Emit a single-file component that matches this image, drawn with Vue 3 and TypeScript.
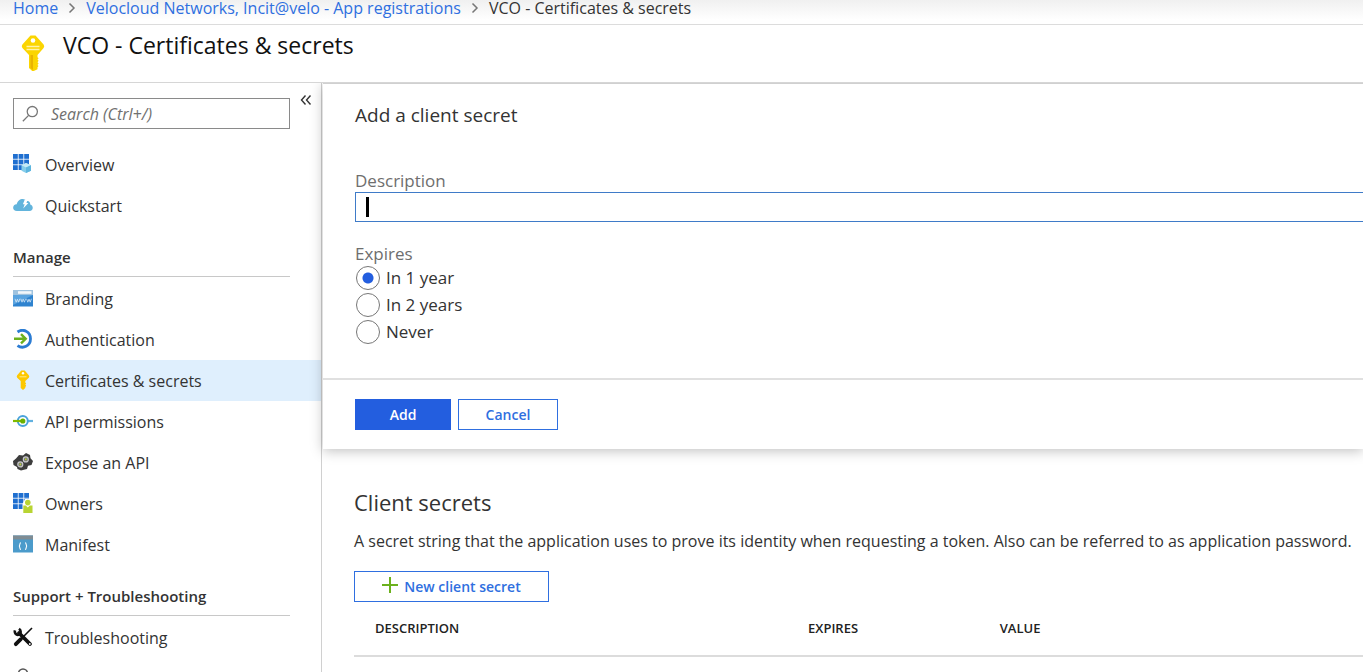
<script setup lang="ts">
import { ref } from 'vue'

interface NavItem {
  label: string
  icon: string
}

interface NavGroup {
  title: string
  items: NavItem[]
}

const groups: NavGroup[] = [
  {
    title: '',
    items: [
      { label: 'Overview', icon: 'overview' },
      { label: 'Quickstart', icon: 'cloud' },
    ],
  },
  {
    title: 'Manage',
    items: [
      { label: 'Branding', icon: 'www' },
      { label: 'Authentication', icon: 'auth' },
      { label: 'Certificates & secrets', icon: 'key' },
      { label: 'API permissions', icon: 'api' },
      { label: 'Expose an API', icon: 'expose' },
      { label: 'Owners', icon: 'owners' },
      { label: 'Manifest', icon: 'manifest' },
    ],
  },
  {
    title: 'Support + Troubleshooting',
    items: [{ label: 'Troubleshooting', icon: 'tools' }],
  },
]

const selected = ref('Certificates & secrets')
const search = ref('')
const description = ref('')
const expiry = ref('In 1 year')
const expiryOptions: string[] = ['In 1 year', 'In 2 years', 'Never']
const columns: string[] = ['Description', 'Expires', 'Value']
const gridCells: number[][] = [
  [0, 0], [5.6, 0], [11.2, 0],
  [0, 5.6], [5.6, 5.6], [11.2, 5.6],
  [0, 11.2], [5.6, 11.2],
]
</script>

<template>
  <div class="app">
    <nav class="crumbs" aria-label="Breadcrumb">
      <a href="#">Home</a>
      <svg class="chev" viewBox="0 0 8 12" aria-hidden="true"><path d="M1.5 1.5 6 6l-4.5 4.5" /></svg>
      <a href="#">Velocloud Networks, Incit@velo - App registrations</a>
      <svg class="chev" viewBox="0 0 8 12" aria-hidden="true"><path d="M1.5 1.5 6 6l-4.5 4.5" /></svg>
      <span>VCO - Certificates &amp; secrets</span>
    </nav>

    <header class="head">
      <svg class="head-key" viewBox="0 0 24 36" aria-hidden="true">
        <path fill="#fbd501" d="M9.500.6h5L22.600 9.500q1.300 1.700 0 3.400L16.500 20v2.200l1.100 1-1.100 1.300 1.100 1.300-1.100 1.400 1.100 1.300-1.100 1.400 1 1.200-1 1.100v2L12.800 36h-1.600L8 32.900V20l-6.600-7.100q-1.300-1.700 0-3.400z" />
        <path fill="#e9b400" d="M9.500 20H12v15l-2.500-2z" />
        <circle cx="12" cy="5.500" r="2.300" fill="#fff" />
        <path stroke="#fff3a8" stroke-width="1.300" d="M5.500 11.500h13M5.500 14.500h13" />
      </svg>
      <h1>VCO - Certificates &amp; secrets</h1>
    </header>

    <div class="body">
      <aside class="side">
        <div class="search-row">
          <label class="search">
            <svg viewBox="0 0 16 16" aria-hidden="true">
              <circle cx="9.700" cy="6.200" r="4.800" />
              <path d="M6.200 9.800.8 15.300" />
            </svg>
            <input v-model="search" type="text" placeholder="Search (Ctrl+/)" aria-label="Search" />
          </label>
          <button class="collapse" type="button" aria-label="Collapse menu">
            <svg viewBox="0 0 12 12" aria-hidden="true"><path d="M5.500 1.500 1.500 6l4 4.500M10.500 1.500l-4 4.500 4 4.500" /></svg>
          </button>
        </div>

        <section v-for="group in groups" :key="group.title" class="group">
          <h2 v-if="group.title">{{ group.title }}</h2>
          <a
            v-for="item in group.items"
            :key="item.label"
            href="#"
            class="item"
            :class="{ on: item.label === selected }"
            @click.prevent="selected = item.label"
          >
            <svg class="ico" viewBox="0 0 20 20" aria-hidden="true">
              <template v-if="item.icon === 'overview'">
                <rect v-for="(c, i) in gridCells" :key="i" :x="c[0]" :y="c[1]" width="4.800" height="4.800" fill="#1f6fd0" />
                <path fill="#85cdea" d="m13 9 5 2.200v5.600L13 19l-4.500-2.200v-5.600z" />
                <path fill="#c5eaf7" d="m13 9 5 2.200-5 2.300-4.500-2.300z" />
                <path fill="#5db5de" d="M13 13.500V19l5-2.200v-5.600z" />
              </template>
              <template v-else-if="item.icon === 'cloud'">
                <path fill="#62b4dc" d="M4 16c-5.200 0-5-6.500-.3-6.700C4.500 4 11 2 13.800 6c2.600-.4 3.700 1.700 3.400 3.600 3.500.6 3.500 6.400-.7 6.400z" />
                <path fill="#fff" d="M11.800 4.500h3L13.400 8h2l-5.200 5.500 1.500-4.300H9.900z" />
              </template>
              <template v-else-if="item.icon === 'www'">
                <rect y="2" width="20" height="16.500" fill="#2f83cf" />
                <path fill="#59a3df" d="M0 7h20L0 17z" />
                <rect y="2" width="20" height="5" fill="#9fc3df" />
                <rect x="5" y="3.200" width="13.500" height="2.600" fill="#f3f7fa" />
                <path fill="none" stroke="#d7e9f8" stroke-width=".8" d="m2 10.800 1.200 3.400 1.200-3 1.200 3 1.200-3.400m1 0L9 14.200l1.200-3 1.200 3 1.200-3.400m1 0 1.200 3.400 1.200-3 1.200 3 1.200-3.400" />
              </template>
              <template v-else-if="item.icon === 'auth'">
                <path fill="none" stroke="#2b7cd3" stroke-width="2.800" d="M4.500 3C10-1 17.500 2.500 17.500 9.800S10 20.300 4.500 16.600" />
                <path fill="none" stroke="#6bb11d" stroke-width="2.400" d="M1 9.800h11M8 5.200l4.700 4.600L8 14.400" />
              </template>
              <template v-else-if="item.icon === 'key'">
                <path fill="#fdc800" d="M8.300.5h3.400l4.100 4.700q1 1.300 0 2.500L12.300 11v1.500l.9.900-.9 1.100.9 1.200-.9 1.200v1.200L10 20l-2.300-1.900V11L4.200 7.700q-1-1.200 0-2.500z" />
                <circle cx="10" cy="3.300" r="1.200" fill="#fff" />
                <path stroke="#ffe98a" d="M6.500 6.800h7" />
              </template>
              <template v-else-if="item.icon === 'api'">
                <path stroke="#61b1e0" stroke-width="2.200" d="M15 10h5" />
                <circle cx="9.800" cy="10" r="5" fill="#fff" stroke="#4aa3dc" stroke-width="2" />
                <path stroke="#7fba00" stroke-width="2.200" d="M0 10h9" />
                <circle cx="9.800" cy="10" r="2.600" fill="#6bb100" />
              </template>
              <template v-else-if="item.icon === 'expose'">
                <path fill="#3d3d3d" d="M3 6.500 6 3l4 .5L13 1l4 2 .5 3.200L20 9l-1.500 4-3.500.8-1 3.200-4 1-2 .5L4.500 17 4 15l-3.500-2L0 9z" />
                <circle cx="12.800" cy="7.400" r="2.500" fill="#777" stroke="#c9c9c9" stroke-width="1.200" />
                <circle cx="7.300" cy="12.400" r="2.500" fill="#777" stroke="#c9c9c9" stroke-width="1.200" />
                <path fill="#b8d432" d="M12 6.600h1.600v1.600H12zm-5.500 5h1.600v1.600H6.500z" />
              </template>
              <template v-else-if="item.icon === 'owners'">
                <rect v-for="(c, i) in gridCells" :key="i" :x="c[0]" :y="c[1]" width="4.800" height="4.800" fill="#1f6fd0" />
                <path fill="#fff" d="M9.500 11 12 6h6l1.500 5v9h-10z" />
                <circle cx="14.800" cy="9.600" r="2.800" fill="#b8d432" />
                <path fill="#b8d432" d="M10.300 12.500h2.500l2 2 2-2h2.700V20h-9.200z" />
              </template>
              <template v-else-if="item.icon === 'manifest'">
                <rect y="1.500" width="20" height="17" fill="#4b9bcb" />
                <rect y="1.500" width="20" height="4" fill="#7f8c93" />
                <path fill="none" stroke="#fff" stroke-width="1.100" d="M8 8.800c-2 0-.5 3-2 3.300 1.500.3 0 3.300 2 3.300M12 8.800c2 0 .5 3 2 3.300-1.500.3 0 3.300-2 3.300" />
              </template>
              <template v-else>
                <path stroke="#111" stroke-width="1.600" d="M19 1 9 11" />
                <path stroke="#111" stroke-width="3.800" stroke-linecap="round" d="m2.800 17.200 5-5M6 6l11 11" />
                <path fill="none" stroke="#111" stroke-width="2.600" d="M2 3.300c-.8 2.400 1 5 3.600 4.500C8 7.300 8.500 3.500 6 1.700" />
                <circle cx="16.800" cy="17" r=".9" fill="#fff" />
              </template>
            </svg>
            <span>{{ item.label }}</span>
          </a>
        </section>
        <a href="#" class="item" aria-label="Support">
          <svg class="ico" viewBox="0 0 20 20" aria-hidden="true">
            <circle cx="10" cy="5.500" r="4.500" fill="none" stroke="#555" stroke-width="1.500" />
            <path fill="none" stroke="#555" stroke-width="1.500" d="M2 20c0-12 16-12 16 0" />
          </svg>
        </a>
      </aside>

      <main class="main">
        <form class="panel" @submit.prevent>
          <div class="fields">
            <h2>Add a client secret</h2>
            <label class="caption" for="desc">Description</label>
            <div class="box">
              <input id="desc" v-model="description" type="text" />
              <span class="caret" aria-hidden="true"></span>
            </div>
            <fieldset>
              <legend class="caption">Expires</legend>
              <label v-for="option in expiryOptions" :key="option" class="radio">
                <input v-model="expiry" type="radio" name="expiry" :value="option" />
                <span>{{ option }}</span>
              </label>
            </fieldset>
          </div>
          <div class="actions">
            <button class="btn primary" type="submit">Add</button>
            <button class="btn" type="button">Cancel</button>
          </div>
        </form>

        <section class="secrets">
          <h2>Client secrets</h2>
          <p>A secret string that the application uses to prove its identity when requesting a token. Also can be referred to as application password.</p>
          <button class="btn new" type="button">
            <svg viewBox="0 0 16 16" aria-hidden="true"><path d="M8 0v16M0 8h16" /></svg>
            <span>New client secret</span>
          </button>
          <table>
            <thead>
              <tr>
                <th v-for="column in columns" :key="column" scope="col">{{ column }}</th>
              </tr>
            </thead>
          </table>
        </section>
      </main>
    </div>
  </div>
</template>

<style>
body {
  margin: 0;
}
</style>

<style scoped>
.app {
  display: flex;
  flex-direction: column;
  height: 100vh;
  overflow: hidden;
  background: #fff;
  color: #333;
  font-family: "Open Sans", "Noto Sans", sans-serif;
  font-size: 16px;
  line-height: 20px;
}
.app * {
  box-sizing: border-box;
}
h1,
h2,
p {
  margin: 0;
  font-weight: 400;
}
a {
  color: #2f6fe0;
  text-decoration: none;
}
input,
button {
  font: inherit;
}
.crumbs {
  display: flex;
  flex: none;
  align-items: center;
  gap: 10px;
  height: 25px;
  padding: 0 13px 8px;
  border-bottom: 1px solid #dcdcdc;
  background: linear-gradient(#f0f0f0, #fff 20px);
  line-height: 16px;
  white-space: nowrap;
}
.chev {
  width: 8px;
  height: 12px;
  fill: none;
  stroke: #777;
  stroke-width: 1.5;
}
.head {
  display: flex;
  flex: none;
  align-items: flex-start;
  gap: 18px;
  height: 58px;
  padding: 8px 21px;
  border-bottom: 1px solid #d6d6d6;
}
.head-key {
  width: 24px;
  height: 36px;
  margin-top: 2px;
}
.head h1 {
  color: #111;
  font-size: 23px;
  line-height: 24px;
}
.body {
  display: flex;
  flex: 1;
  min-height: 0;
  overflow: hidden;
}
.side {
  flex: none;
  width: 322px;
  border-right: 1px solid #d0d0d0;
}
.search-row {
  display: flex;
  align-items: flex-start;
  gap: 8px;
  padding: 15px 0 15px 13px;
}
.search {
  display: flex;
  align-items: center;
  gap: 12px;
  width: 277px;
  height: 31px;
  padding: 0 8px;
  border: 1px solid #8a8a8a;
}
.search svg {
  flex: none;
  width: 17px;
  height: 17px;
  fill: none;
  stroke: #777;
  stroke-width: 1.2;
}
.search input {
  flex: 1;
  min-width: 0;
  padding: 0;
  border: 0;
  outline: 0;
  background: none;
}
.search input::placeholder {
  color: #707070;
  font-style: italic;
  opacity: 1;
}
.collapse {
  width: 16px;
  padding: 0;
  border: 0;
  background: none;
  line-height: 0;
}
.collapse svg {
  width: 12px;
  height: 12px;
  margin-top: -4px;
  fill: none;
  stroke: #333;
  stroke-width: 1.4;
}
.group h2 {
  margin: 21px 31px 1px 13px;
  padding-bottom: 9px;
  border-bottom: 1px solid #c8c8c8;
  font-size: 15px;
  font-weight: 600;
}
.item {
  display: flex;
  align-items: center;
  gap: 12px;
  height: 41px;
  padding-left: 13px;
  color: #333;
}
.item.on {
  background: #dfeffd;
}
.ico {
  width: 20px;
  height: 20px;
  margin-top: -2px;
}
.main {
  flex: 1;
  min-width: 0;
}
.panel {
  margin-left: 1px;
  border-top: 1px solid #d0d0d0;
  background: #fff;
  box-shadow: 0 2px 12px rgba(0, 0, 0, 0.25);
  position: relative;
}
.fields {
  padding: 19px 0 33px 32px;
  border-bottom: 2px solid #e0e0e0;
}
.fields h2 {
  margin-bottom: 44px;
  font-size: 19px;
  line-height: 24px;
}
.caption {
  display: block;
  padding: 0;
  color: #6e6e6e;
  font-size: 17px;
}
.box {
  position: relative;
  margin-top: 1px;
}
.box input {
  display: block;
  width: 100%;
  height: 30px;
  padding: 0 10px;
  border: 1px solid #3f7bc8;
  border-right: 0;
  border-radius: 0;
  outline: 0;
  background: #fff;
}
.caret {
  position: absolute;
  top: 5px;
  left: 11px;
  width: 3px;
  height: 20px;
  background: #000;
}
fieldset {
  margin: 22px 0 0;
  padding: 0;
  border: 0;
}
.radio {
  display: flex;
  align-items: center;
  gap: 6px;
  width: max-content;
  height: 27px;
  padding-left: 1px;
  font-size: 17px;
}
.radio input {
  width: 24px;
  height: 24px;
  margin: 0;
  border: 1px solid #777;
  border-radius: 50%;
  appearance: none;
  background: #fff;
}
.radio input:checked {
  background: radial-gradient(circle, #235edf 5px, #fff 6px);
}
.actions {
  display: flex;
  gap: 7px;
  padding: 19px 32px 19px;
}
.btn {
  height: 31px;
  width: 100px;
  padding: 0;
  border: 1px solid #2f6fe0;
  background: #fff;
  color: #2f6fe0;
  font-size: 14px;
  font-weight: 600;
}
.btn.primary {
  width: 96px;
  border-color: #235edf;
  background: #235edf;
  color: #fff;
}
.secrets {
  padding: 37px 0 0 32px;
}
.secrets h2 {
  font-size: 22px;
  line-height: 32px;
}
.secrets p {
  margin: 13px 0 20px;
  white-space: nowrap;
}
.btn.new {
  display: flex;
  align-items: center;
  justify-content: center;
  gap: 6px;
  width: 195px;
}
.new svg {
  width: 16px;
  height: 16px;
  margin-top: -4px;
  stroke: #6bb11d;
  stroke-width: 2;
}
table {
  width: 100%;
  border-collapse: collapse;
  table-layout: fixed;
}
th {
  height: 54px;
  padding: 0 0 2px;
  border-bottom: 2px solid #dcdcdc;
  color: #222;
  font-size: 13px;
  font-weight: 600;
  text-align: left;
  text-transform: uppercase;
}
th:nth-child(1) {
  width: 45%;
  padding-left: 21px;
}
th:nth-child(2) {
  width: 19%;
}
</style>
